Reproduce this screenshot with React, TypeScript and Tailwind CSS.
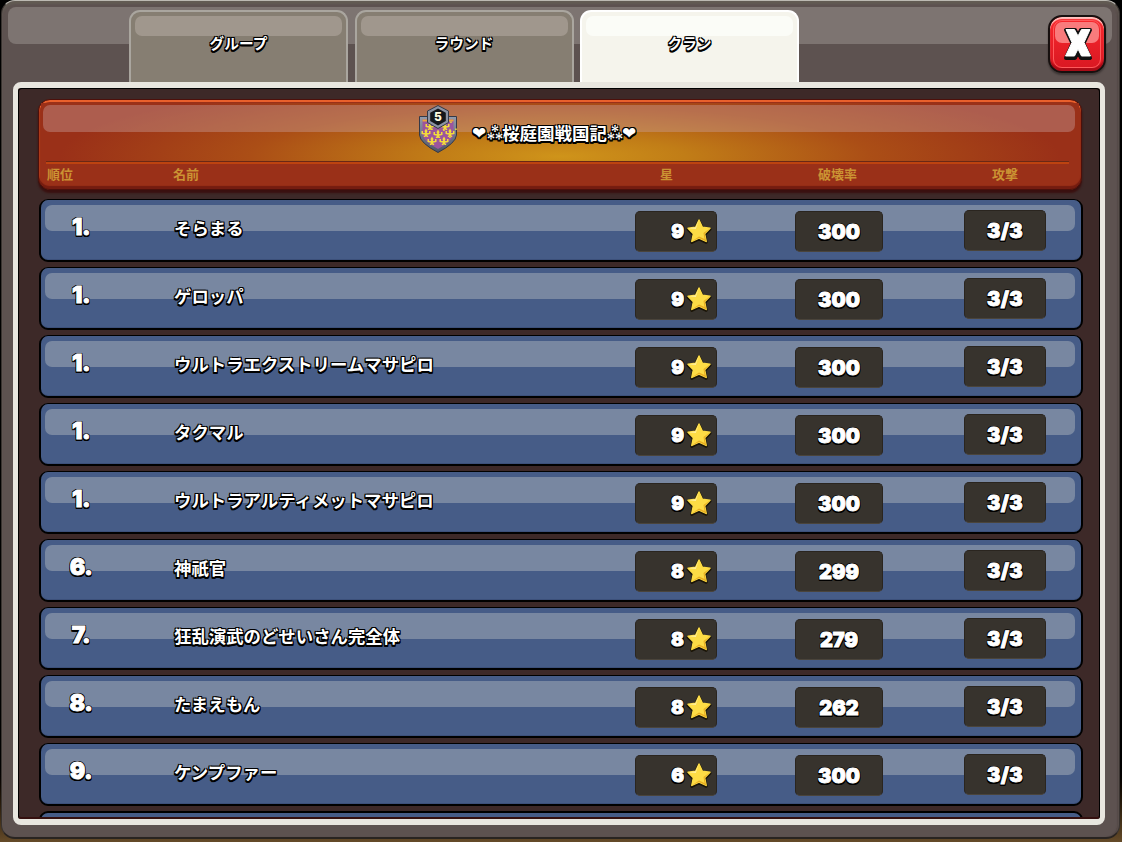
import { clsx } from 'clsx';

interface Member {
  rank: number;
  name: string;
  stars: number;
  destruction: number;
  attacks: string;
}

const members: Member[] = [
  { rank: 1, name: 'そらまる', stars: 9, destruction: 300, attacks: '3/3' },
  { rank: 1, name: 'ゲロッパ', stars: 9, destruction: 300, attacks: '3/3' },
  { rank: 1, name: 'ウルトラエクストリームマサピロ', stars: 9, destruction: 300, attacks: '3/3' },
  { rank: 1, name: 'タクマル', stars: 9, destruction: 300, attacks: '3/3' },
  { rank: 1, name: 'ウルトラアルティメットマサピロ', stars: 9, destruction: 300, attacks: '3/3' },
  { rank: 6, name: '神祇官', stars: 8, destruction: 299, attacks: '3/3' },
  { rank: 7, name: '狂乱演武のどせいさん完全体', stars: 8, destruction: 279, attacks: '3/3' },
  { rank: 8, name: 'たまえもん', stars: 8, destruction: 262, attacks: '3/3' },
  { rank: 9, name: 'ケンプファー', stars: 6, destruction: 300, attacks: '3/3' },
];

const tabs = ['グループ', 'ラウンド', 'クラン'];

const jp = "font-['Noto_Sans_CJK_JP','DejaVu_Sans',sans-serif]";
const digits = "font-['Inter',sans-serif] font-black [-webkit-text-stroke:0.9px_#fff]";
const outline =
  '[text-shadow:-1px_-1px_0_#000,1px_-1px_0_#000,-1px_0_0_#000,1px_0_0_#000,-1px_1px_0_#000,1px_1px_0_#000,-1px_2px_0_#000,0_2px_0_#000,1px_2px_0_#000]';

function Star() {
  return (
    <svg width="26" height="27" viewBox="0 0 26 27" className="block">
      <path
        d="M13 2 L16.4 9.2 L24 10.3 L18.6 15.8 L20.2 23.4 L13 20 L5.8 23.4 L7.4 15.8 L2 10.3 L9.6 9.2 Z"
        transform="translate(0 1)"
        fill="#1a1408"
        stroke="#1a1408"
        strokeWidth="3"
        strokeLinejoin="round"
      />
      <path
        d="M13 2 L16.4 9.2 L24 10.3 L18.6 15.8 L20.2 23.4 L13 20 L5.8 23.4 L7.4 15.8 L2 10.3 L9.6 9.2 Z"
        fill="#fddc45"
        stroke="#fddc45"
        strokeWidth="1.5"
        strokeLinejoin="round"
      />
      <path d="M13 2 L9.6 9.2 L2 10.3 L9.8 11 Z" fill="#fff0a0" />
      <path d="M24 10.3 L18.6 15.8 L20.2 23.4 L13 20 L5.8 23.4 L13 18.5 L18.5 21 L17.5 15 Z" fill="#e9ae22" />
    </svg>
  );
}

const lilies = [
  [12, 22], [27, 22], [8, 29], [20, 30], [32, 29], [14, 37], [26, 37],
];

function ClanBadge() {
  return (
    <svg width="40" height="50" viewBox="0 0 40 50" className="block">
      <defs>
        <linearGradient id="shield-rim" x1="0" y1="0" x2="0" y2="1">
          <stop offset="0" stopColor="#939bab" />
          <stop offset="1" stopColor="#4d5567" />
        </linearGradient>
      </defs>
      <path d="M1.5 12.5 H38.5 V31 Q38 39 20 48.5 Q2 39 1.5 31 Z" fill="url(#shield-rim)" stroke="#353947" strokeWidth="1" />
      <path d="M4.500 15.5 H35.500 V31 Q34 37.5 20 45 Q6 37.5 4.500 31 Z" fill="#9c559d" />
      <path d="M4.500 15.5 H35.500 V17.5 H4.500 Z" fill="#e9a53a" />
      {lilies.map(([x, y]) => (
        <g key={`${x}-${y}`} transform={`translate(${x} ${y})`} fill="#f2dc3c">
          <path d="M0 -4.500 L1.500 -2 L.8 0 H3 V-2 H4.500 V1 L1 1.800 L2.500 4 H.7 L0 3 L-.7 4 H-2.500 L-1 1.800 L-4.500 1 V-2 H-3 V0 H-.8 L-1.500 -2 Z" />
          <rect x="5.2" y="-4.500" width="1.500" height="1.500" />
        </g>
      ))}
      <path d="M20 1.5 L30.5 7 V18.5 L20 24.5 L9.5 18.5 V7 Z" fill="#8c93a3" stroke="#343846" strokeWidth="1" />
      <path d="M20 4.500 L27.800 8.700 V17 L20 21.500 L12.200 17 V8.700 Z" fill="#15171b" />
      <text x="20" y="16.8" textAnchor="middle" fontFamily="Inter, sans-serif" fontWeight="800" fontSize="12" fill="#fffbe0">
        5
      </text>
    </svg>
  );
}

function CloseButton() {
  return (
    <button
      type="button"
      className="absolute left-[1046px] top-[14px] h-[58px] w-[58px] rounded-[14px] border-2 border-[#17100f] bg-gradient-to-b from-[#f9282d] to-[#d81722] shadow-[inset_0_2px_1px_#ffc4c0,inset_0_-3px_1px_#a90c17,0_2px_2px_rgba(0,0,0,0.35)]"
    >
      <span className="absolute inset-[3px] rounded-[9px] border border-[#ff5a5c]" />
      <span className="absolute left-[5px] right-[5px] top-[5px] h-[21px] rounded-[7px] bg-[#f97b7c]" />
      <svg width="34" height="36" viewBox="0 0 34 36" className="absolute left-[11px] top-[9px]">
        <path d="M5 4 H14 L17 10 L20 4 H29 L22.500 17.500 L29 32 H20 L17 25.500 L14 32 H5 L11.500 17.500 Z" fill="#111" stroke="#111" strokeWidth="4" strokeLinejoin="round" />
        <path d="M5 3.500 H13.500 L17 10 L20.500 3.500 H29 L23 16.500 L29.500 30 H20.500 L17 23 L13.500 30 H4.500 L11 16.500 Z" fill="#fff" stroke="#fff" strokeWidth="1" strokeLinejoin="round" />
      </svg>
    </button>
  );
}

function Tab({ label, active }: { label: string; active: boolean }) {
  return (
    <div
      className={clsx(
        'relative flex h-[72px] w-[219px] justify-center rounded-t-[11px] border-2 border-b-0 pt-[20px]',
        active ? 'border-white bg-[#f5f4ec]' : 'border-[#aaa69f] bg-[#867e72]',
      )}
    >
      <span
        className={clsx(
          'absolute left-[4px] right-[4px] top-[4px] h-5 rounded-[7px]',
          active ? 'bg-[#fbfcf7]' : 'bg-[#a0978d]',
        )}
      />
      <span className={clsx('relative text-[14.7px] font-bold leading-[22px] text-white', outline)}>{label}</span>
    </div>
  );
}

function TableHeader() {
  return (
    <div className="ml-[19px] h-[91px] w-[1044px] rounded-[12px] border border-[#4c100b] bg-[#9a3018] shadow-[inset_0_2px_0_#e9602c,inset_0_-3px_1px_#741c10,inset_1px_0_1px_#b6401c,0_3px_2px_#3a100f]">
      <div className="relative mx-[4px] h-[61px] pt-[4px]">
        <div className="absolute -left-[2px] -right-[2px] bottom-0 top-[3px] bg-[radial-gradient(ellipse_500px_80px_at_50%_92%,#cf941a_0%,#c17d17_25%,#ab4e16_62%,#9a3018_100%)]" />
        <div className="absolute left-0 right-[2px] top-[5px] h-[27px] rounded-[7px] bg-[#cba3a0]/40" />
        <div className="relative flex items-center pl-[375px]">
          <ClanBadge />
          <h1 className={clsx('ml-[14px] flex items-center whitespace-nowrap pt-[7px] text-[17.5px] font-bold leading-[26px] text-white', outline)}>
            <span className="w-[15px] font-['DejaVu_Sans',sans-serif] text-[17px]">❤</span>
            <span className="w-[15px] -translate-x-px -translate-y-[2px] text-[18px]">⁂</span>
            <span>桜庭園戦国記</span>
            <span className="w-[15px] -translate-x-px -translate-y-[2px] text-[18px]">⁂</span>
            <span className="font-['DejaVu_Sans',sans-serif] text-[17px]">❤</span>
          </h1>
        </div>
      </div>
      <div className="mx-[7px] mr-[12px] h-[3px] border-t border-[#6a2815] bg-[#bd4310]" />
      <div className="-mt-px flex text-[13px] font-bold leading-[22px] text-[#cb9333]">
        <span className="w-[126px] pl-[8px]">順位</span>
        <span className="w-[488px] pl-[8px]">名前</span>
        <span className="w-[157px] pl-[7px]">星</span>
        <span className="w-[174px] pl-[8px]">破壊率</span>
        <span className="pl-[8px]">攻撃</span>
      </div>
    </div>
  );
}

const box = 'flex h-[41px] items-center justify-center rounded-[5px] border border-[#2a251f] border-b-[#4a443b] bg-[#37332d]';

function MemberRow({ member }: { member: Member }) {
  return (
    <div className="relative ml-[20px] flex h-[63px] w-[1044px] shrink-0 rounded-[9px] border-2 border-t-[1.5px] border-black bg-[#465c87] shadow-[inset_0_-1px_0_#3c507a]">
      <span className="absolute left-[4px] top-[5px] h-[26px] w-[1030px] rounded-[7px] bg-[#7887a1]" />
      <span className={clsx('relative w-[80px] pt-[13px] text-center text-[23px] leading-[28px] tracking-[-0.5px] text-white', digits, outline)}>
        {member.rank}.
      </span>
      <span className={clsx('relative w-[514px] whitespace-nowrap pl-[53px] pt-[15px] text-[17.4px] font-bold leading-[26px] text-white', outline)}>
        {member.name}
      </span>
      <div className={clsx(box, 'relative mt-[11px] w-[82px] !justify-end pr-[4px]')}>
        <span className={clsx('-mr-px pr-[3px] text-[19px] leading-6 text-white', digits, outline)}>{member.stars}</span>
        <Star />
      </div>
      <div className={clsx(box, 'relative ml-[78px] mt-[11px] w-[88px]')}>
        <span className={clsx('text-[20px] leading-6 text-white', digits, outline)}>{member.destruction}</span>
      </div>
      <div className={clsx(box, 'relative ml-[81px] mt-[10px] w-[82px]')}>
        <span className={clsx('text-[20px] leading-6 tracking-[0.3px] text-white', digits, outline)}>{member.attacks}</span>
      </div>
    </div>
  );
}

export default function App() {
  return (
    <div className={clsx('h-[842px] w-[1122px] overflow-hidden bg-gradient-to-b from-black from-90% to-[#654b29]', jp)}>
      <div className="relative ml-px h-[839px] w-[1119px] rounded-[14px] border border-b-2 border-t-[#bcb9b2] border-x-[#393330] border-b-[#292421] bg-[#5d5250] shadow-[inset_0_3px_2px_#625b53,inset_-2px_0_1px_#554a48]">
        <div className="absolute left-[6px] top-[6px] h-[37px] w-[1104px] rounded-[8px] bg-[#7d7471]" />
        <CloseButton />

        <div className="relative flex w-[800px] gap-[6.5px] pl-[127px] pt-[9px]">
          {tabs.map((label, i) => (
            <Tab key={label} label={label} active={i === 2} />
          ))}
        </div>

        <div className="relative ml-[11px] h-[743px] w-[1092px] overflow-hidden rounded-[8px] border-x-[5px] border-y-[6px] border-[#e8e6df] bg-[#3d2928]">
          <div className="h-full rounded-[4px] border border-b-2 border-black border-b-[#35100f] pt-[10px]">
            <TableHeader />
            <div className="mt-[9px] flex h-[618px] flex-col gap-[5px] overflow-hidden">
              {members.map((member) => (
                <MemberRow key={member.name} member={member} />
              ))}
              {/* next row, scrolled out of view */}
              <div className="ml-[20px] h-[63px] w-[1044px] shrink-0 rounded-[9px] border-2 border-black bg-[#465c87]" />
            </div>
          </div>
        </div>
      </div>
    </div>
  );
}
